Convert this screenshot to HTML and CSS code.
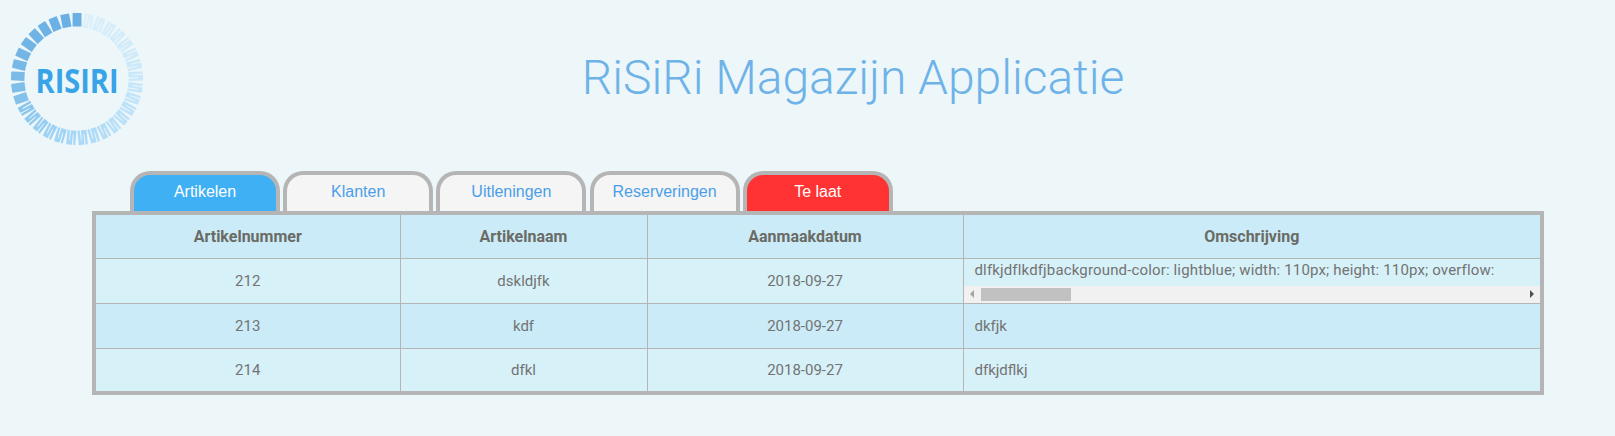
FILE: index.html
```html
<!DOCTYPE html>
<html lang="nl">
<head>
<meta charset="utf-8">
<title>RiSiRi Magazijn Applicatie</title>
<link rel="stylesheet" href="styles.css">
</head>
<body>
<header class="top">
  <svg class="logo" viewBox="0 0 132 132" width="132" height="132" role="img" aria-label="RiSiRi logo">
    <defs>
      <path id="tile" d="M61.6 0.5Q61.6 0 62.1 0H70Q70.5 0 70.5 0.5V13.5H61.6Z"/>
      <path id="frayed" d="M61.5 0H63.6L64 10.5H64.7L64.9 0H70.5V14.5H68.2L67.9 4H67.2L67 14.5H61.5Z"/>
    </defs>
    <use href="#tile" fill="#6ab0e5" transform="rotate(0 66 66)"/>
    <use href="#frayed" fill="#dcf0fa" transform="rotate(10.9 66 66)"/>
    <use href="#frayed" fill="#d8eefa" transform="rotate(21.8 66 66)"/>
    <use href="#frayed" fill="#d6edfa" transform="rotate(32.7 66 66)"/>
    <use href="#frayed" fill="#d3ecf9" transform="rotate(43.6 66 66)"/>
    <use href="#frayed" fill="#d0ebf9" transform="rotate(54.5 66 66)"/>
    <use href="#frayed" fill="#cfebf9" transform="rotate(65.5 66 66)"/>
    <use href="#frayed" fill="#cbe9f9" transform="rotate(76.4 66 66)"/>
    <use href="#frayed" fill="#c9e8f9" transform="rotate(87.3 66 66)"/>
    <use href="#frayed" fill="#c5e6f9" transform="rotate(98.2 66 66)"/>
    <use href="#frayed" fill="#c2e4f8" transform="rotate(109.1 66 66)"/>
    <use href="#frayed" fill="#bee3f8" transform="rotate(120 66 66)"/>
    <use href="#frayed" fill="#bbe1f8" transform="rotate(130.9 66 66)"/>
    <use href="#frayed" fill="#b8e0f8" transform="rotate(141.8 66 66)"/>
    <use href="#frayed" fill="#b3ddf7" transform="rotate(152.7 66 66)"/>
    <use href="#frayed" fill="#aedbf7" transform="rotate(163.6 66 66)"/>
    <use href="#frayed" fill="#aad9f7" transform="rotate(174.5 66 66)"/>
    <use href="#frayed" fill="#a6d7f6" transform="rotate(185.5 66 66)"/>
    <use href="#frayed" fill="#a2d4f5" transform="rotate(196.4 66 66)"/>
    <use href="#frayed" fill="#9dd2f4" transform="rotate(207.3 66 66)"/>
    <use href="#frayed" fill="#97cef2" transform="rotate(218.2 66 66)"/>
    <use href="#frayed" fill="#90caf0" transform="rotate(229.1 66 66)"/>
    <use href="#frayed" fill="#8ac6ed" transform="rotate(240 66 66)"/>
    <use href="#tile" fill="#84c2eb" transform="rotate(250.9 66 66)"/>
    <use href="#tile" fill="#7ebee9" transform="rotate(261.8 66 66)"/>
    <use href="#tile" fill="#7abbe8" transform="rotate(272.7 66 66)"/>
    <use href="#tile" fill="#76b8e7" transform="rotate(283.6 66 66)"/>
    <use href="#tile" fill="#73b5e7" transform="rotate(294.5 66 66)"/>
    <use href="#tile" fill="#71b4e6" transform="rotate(305.5 66 66)"/>
    <use href="#tile" fill="#6fb3e6" transform="rotate(316.4 66 66)"/>
    <use href="#tile" fill="#6db2e6" transform="rotate(327.3 66 66)"/>
    <use href="#tile" fill="#6cb1e5" transform="rotate(338.2 66 66)"/>
    <use href="#tile" fill="#6bb0e5" transform="rotate(349.1 66 66)"/>
    <text class="logo-text" x="24.5" y="80" textLength="83" lengthAdjust="spacingAndGlyphs">RISIRI</text>
  </svg>
  <h1 class="title">RiSiRi Magazijn Applicatie</h1>
</header>
<nav class="tabs">
  <a class="tab tab-active">Artikelen</a>
  <a class="tab">Klanten</a>
  <a class="tab">Uitleningen</a>
  <a class="tab">Reserveringen</a>
  <a class="tab tab-late">Te laat</a>
</nav>
<div class="table-wrap">
  <table class="grid">
    <colgroup>
      <col class="c1"><col class="c2"><col class="c3"><col class="c4">
    </colgroup>
    <thead>
      <tr class="r-head"><th>Artikelnummer</th><th>Artikelnaam</th><th>Aanmaakdatum</th><th>Omschrijving</th></tr>
    </thead>
    <tbody>
      <tr class="r-a">
        <td>212</td><td>dskldjfk</td><td>2018-09-27</td>
        <td class="desc desc-scroll">
          <div class="scroll-text">dlfkjdflkdfjbackground-color: lightblue; width: 110px; height: 110px; overflow:</div>
          <div class="scrollbar">
            <span class="arrow arrow-left"></span>
            <span class="thumb"></span>
            <span class="arrow arrow-right"></span>
          </div>
        </td>
      </tr>
      <tr class="r-b"><td>213</td><td>kdf</td><td>2018-09-27</td><td class="desc">dkfjk</td></tr>
      <tr class="r-c"><td>214</td><td>dfkl</td><td>2018-09-27</td><td class="desc">dfkjdflkj</td></tr>
    </tbody>
  </table>
</div>
</body>
</html>
```
FILE: styles.css
```css
* { box-sizing: border-box; }
html, body { margin: 0; padding: 0; }
body {
  background: #edf6f9;
  font-family: Roboto, "Liberation Sans", sans-serif;
  color: #737373;
  overflow: hidden;
}
.top {
  display: flex;
  align-items: flex-start;
  height: 171px;
  padding: 13px 52px 0 11px;
}
.logo { flex: none; display: block; }
.logo-text {
  font-family: "Open Sans", "Liberation Sans", sans-serif;
  font-weight: 700;
  font-size: 34px;
  fill: #38a3e6;
}
.title {
  flex: 1;
  margin: 37px 0 0;
  text-align: center;
  font-family: Roboto, sans-serif;
  font-weight: 300;
  font-size: 48px;
  line-height: 56px;
  color: #6db3e8;
}
.tabs {
  display: flex;
  gap: 3.2px;
  margin-left: 130px;
  height: 40px;
}
.tab {
  width: 150px;
  height: 40px;
  border: 4px solid #b5b5b5;
  border-bottom: 0;
  border-radius: 20px 20px 0 0;
  background: #f5f5f5;
  color: #4a9fe8;
  font-family: "Liberation Sans", Arial, sans-serif;
  font-size: 16px;
  line-height: 34px;
  text-align: center;
}
.tab-active { background: #40b0f5; color: #fff; }
.tab-late { background: #ff3333; color: #fff; }
.table-wrap {
  width: 1452px;
  margin-left: 92px;
  border: 4px solid #b5b5b5;
}
.grid {
  width: 1444px;
  table-layout: fixed;
  border-collapse: collapse;
  font-size: 15px;
}
.c1 { width: 304px; }
.c2 { width: 247px; }
.c3 { width: 316px; }
.c4 { width: 577px; }
.grid th, .grid td {
  padding: 0;
  text-align: center;
  border: 1px solid #b5b5b5;
}
.grid tr > :first-child { border-left: 0; }
.grid tr > :last-child { border-right: 0; }
.grid thead th { border-top: 0; }
.grid tbody tr:last-child td { border-bottom: 0; }
.r-head { height: 43px; background: #caebf7; }
.r-head th { font-weight: 700; font-size: 16px; color: #6b6b66; }
.r-a { height: 45px; background: #d7f1f9; }
.r-b { height: 45px; background: #caebf7; }
.r-c { height: 43px; background: #d7f1f9; }
.grid td.desc { text-align: left; padding-left: 11px; }
.grid td.desc-scroll { padding: 0; vertical-align: top; }
.scroll-text {
  height: 27px;
  padding: 1px 0 0 11px;
  line-height: 20px;
  white-space: nowrap;
  overflow: hidden;
  letter-spacing: 0.15px;
}
.scrollbar {
  display: flex;
  align-items: center;
  height: 17px;
  background: #f1f1f1;
  padding: 0 6px;
}
.arrow {
  width: 0;
  height: 0;
  border-top: 4px solid transparent;
  border-bottom: 4px solid transparent;
}
.arrow-left { border-right: 4px solid #a3a3a3; }
.arrow-right { border-left: 4px solid #505050; margin-left: auto; }
.thumb {
  width: 90px;
  height: 13px;
  margin-left: 7px;
  background: #c1c1c1;
}
```
